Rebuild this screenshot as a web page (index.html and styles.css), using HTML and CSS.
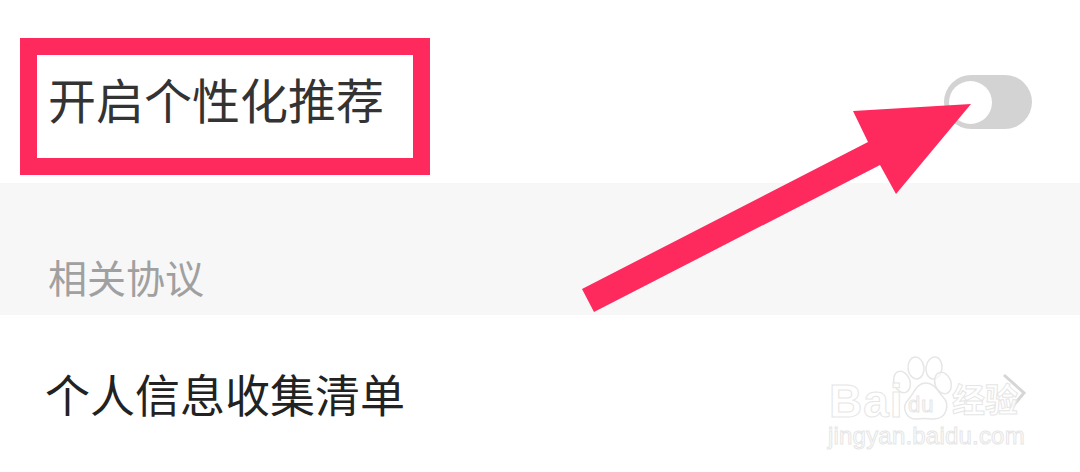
FILE: index.html
```html
<!DOCTYPE html>
<html lang="zh-CN">
<head>
    <meta charset="UTF-8">
    <title>开启个性化推荐</title>
    <link rel="stylesheet" href="styles.css">
</head>
<body>

<div class="page">
    <!-- Recommendation switch -->
    <div class="row row-switch">
        <span class="switch-title">开启个性化推荐</span>
        <div class="toggle"><div class="knob"></div></div>
    </div>

    <!-- Section header -->
    <div class="band">
        <span class="band-title">相关协议</span>
    </div>

    <!-- Link row -->
    <div class="row row-link">
        <span class="link-title">个人信息收集清单</span>
        <svg class="chevron" width="26" height="44" viewBox="0 0 26 44">
            <path d="M3 2 L23 20 L11 34" fill="none" stroke="#d6d6d6" stroke-width="3"/>
        </svg>
    </div>

    <!-- Annotations drawn over the screenshot -->
    <div class="red-box"></div>
    <svg class="arrow" width="1080" height="472" viewBox="0 0 1080 472">
        <polygon fill="#fe2a5d" points="582,289 868,142 853,111 971,104 896,194 880,165 594,312"/>
    </svg>

    <!-- Watermark -->
    <div class="watermark">
        <svg class="paw" width="70" height="75" viewBox="0 0 70 75">
            <g fill="#fff" fill-opacity="0.6" stroke="#e6e6e6" stroke-width="1.5">
                <ellipse cx="12" cy="32" rx="8" ry="11" transform="rotate(-20 12 32)"/>
                <ellipse cx="26" cy="18" rx="8" ry="11" transform="rotate(-6 26 18)"/>
                <ellipse cx="44" cy="18" rx="8" ry="11" transform="rotate(8 44 18)"/>
                <ellipse cx="53" cy="33" rx="8" ry="11" transform="rotate(-20 53 33)"/>
                <path d="M36 33 C45 33 48 42 53 47 C60 54 57 69 44 69 C38 69 33 68 27 69 C16 70 11 57 18 50 C24 44 26 33 36 33 Z"/>
            </g>
        </svg>
        <span class="wm-bai">Bai</span>
        <span class="wm-du">du</span>
        <span class="wm-jy">经验</span>
        <span class="wm-url">jingyan.baidu.com</span>
    </div>
</div>

</body>
</html>
```

FILE: styles.css
```css
html, body {
    margin: 0;
    padding: 0;
    background-color: #fff;
}
.page {
    position: relative;
    width: 1080px;
    height: 472px;
    overflow: hidden;
    font-family: "Liberation Sans", "Noto Sans CJK SC", sans-serif;
}
.row {
    display: flex;
    align-items: center;
    justify-content: space-between;
}
.row-switch {
    height: 183px;
    padding: 23px 48px 0 48px;
    box-sizing: border-box;
    color: #333;
}
.switch-title {
    font-size: 48px;
    line-height: 56px;
}
.toggle {
    width: 88px;
    height: 54px;
    border-radius: 27px;
    background-color: #d3d3d3;
    padding: 6px 0 0 5px;
    box-sizing: border-box;
    margin-top: -2px;
}
.knob {
    width: 43px;
    height: 43px;
    border-radius: 50%;
    background-color: #fff;
}
.band {
    height: 132px;
    background-color: #f7f7f8;
    padding: 75px 0 0 48px;
    box-sizing: border-box;
}
.band-title {
    display: block;
    font-size: 39px;
    line-height: 44px;
    color: #a0a0a0;
}
.row-link {
    height: 157px;
    padding: 0 53px 0 45px;
    box-sizing: border-box;
    color: #222;
    align-items: flex-start;
}
.link-title {
    font-size: 45px;
    line-height: 52px;
    margin-top: 57px;
}
.chevron {
    margin-top: 58px;
}
.red-box {
    position: absolute;
    left: 20px;
    top: 38px;
    width: 410px;
    height: 137px;
    border: 17px solid #fe2a5d;
    box-sizing: border-box;
}
.arrow {
    position: absolute;
    left: 0;
    top: 0;
}
.watermark {
    position: absolute;
    left: 820px;
    top: 350px;
    width: 220px;
    height: 110px;
    color: rgba(255, 255, 255, 0.85);
    font-weight: bold;
    -webkit-text-stroke: 1px #e6e6e6;
}
.paw {
    position: absolute;
    left: 70px;
    top: 0;
}
.wm-bai {
    position: absolute;
    left: 9px;
    top: 24px;
    font-size: 46px;
    line-height: 54px;
    letter-spacing: 1px;
}
.wm-du {
    position: absolute;
    left: 88px;
    top: 42px;
    font-size: 22px;
    line-height: 26px;
    font-weight: normal;
    letter-spacing: 1px;
}
.wm-jy {
    position: absolute;
    left: 132px;
    top: 28px;
    font-size: 33px;
    line-height: 46px;
}
.wm-url {
    position: absolute;
    left: 8px;
    top: 71px;
    font-size: 24px;
    line-height: 30px;
    font-weight: normal;
    letter-spacing: 0.2px;
}
```
